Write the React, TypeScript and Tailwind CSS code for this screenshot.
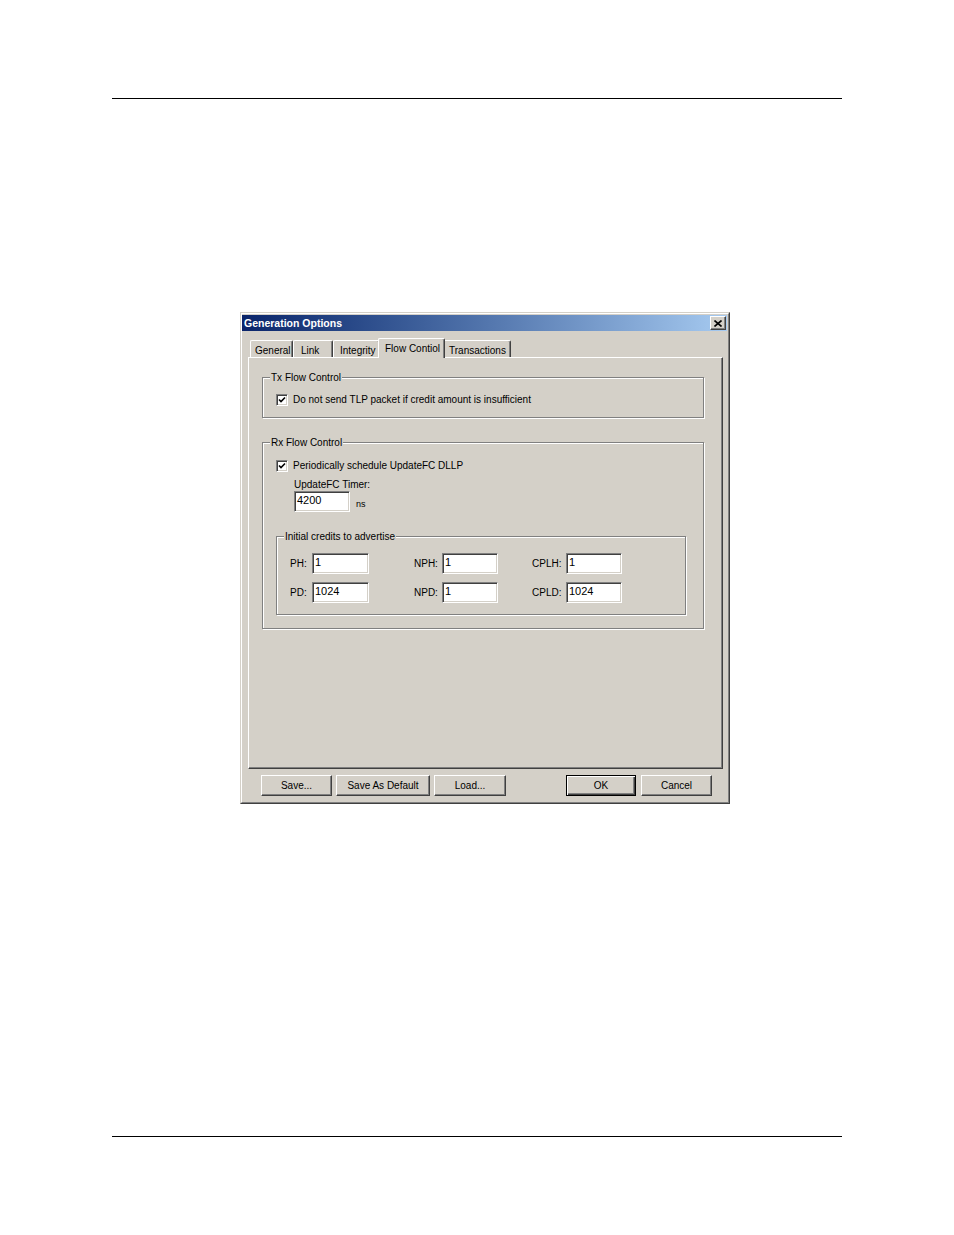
import React from "react";

const face = "bg-[#d4d0c8]";

function Raised({ className = "", children }: { className?: string; children?: React.ReactNode }) {
  return (
    <div
      className={`border border-t-white border-l-white border-r-[#404040] border-b-[#404040] shadow-[inset_-1px_-1px_0_#808080] ${face} ${className}`}
    >
      {children}
    </div>
  );
}

function Field({ value, w }: { value: string; w: string }) {
  return (
    <div
      className={`${w} h-[21px] bg-white border border-t-[#808080] border-l-[#808080] border-r-white border-b-white shadow-[inset_1px_1px_0_#404040,inset_-1px_-1px_0_#d4d0c8] pl-[2px] pt-[1px] leading-[15px] text-[11px] text-black`}
    >
      {value}
    </div>
  );
}

function CheckBox() {
  return (
    <div className="w-[12px] h-[12px] bg-white border border-t-[#808080] border-l-[#808080] border-r-white border-b-white shadow-[inset_1px_1px_0_#404040,inset_-1px_-1px_0_#d4d0c8] flex items-center justify-center">
      <svg width="8" height="8" viewBox="0 0 8 8">
        <path d="M1 3.5 L3 5.5 L7 1.5" stroke="black" strokeWidth="1.6" fill="none" />
      </svg>
    </div>
  );
}

function Group({
  label,
  className = "",
  children,
}: {
  label: string;
  className?: string;
  children?: React.ReactNode;
}) {
  return (
    <div className={`relative border border-[#808080] shadow-[inset_1px_1px_0_white,1px_1px_0_white] ${className}`}>
      <span className={`absolute -top-[6px] left-[7px] ${face} px-[1px] leading-[12px] whitespace-nowrap`}>{label}</span>
      {children}
    </div>
  );
}

function Tab({ label, w, pl, selected }: { label: string; w: string; pl: string; selected?: boolean }) {
  if (selected) {
    return (
      <div
        className={`${w} ${pl} h-[20px] -mb-px -mx-[2px] relative z-10 ${face} border-t border-l border-t-white border-l-white border-r border-r-[#404040] shadow-[inset_-1px_0_0_#808080] rounded-t-[2px] pt-[3px] leading-[14px] whitespace-nowrap`}
      >
        {label}
      </div>
    );
  }
  return (
    <div
      className={`${w} ${pl} h-[17px] ${face} border-t border-l border-t-white border-l-white border-r border-r-[#404040] shadow-[inset_-1px_0_0_#808080] rounded-t-[2px] pt-[3px] leading-[14px] whitespace-nowrap`}
    >
      {label}
    </div>
  );
}

function Btn({ label, w, def }: { label: string; w: string; def?: boolean }) {
  if (def) {
    return (
      <div
        className={`${w} h-[21px] border border-black shadow-[inset_1px_1px_0_white,inset_-1px_-1px_0_#404040,inset_-2px_-2px_0_#808080] ${face} flex items-center justify-center`}
      >
        {label}
      </div>
    );
  }
  return <Raised className={`${w} h-[21px] flex items-center justify-center`}>{label}</Raised>;
}

function CreditCell({ label, value, labelW, fieldW }: { label: string; value: string; labelW: string; fieldW: string }) {
  return (
    <div className="flex items-center">
      <span className={labelW}>{label}</span>
      <Field value={value} w={fieldW} />
    </div>
  );
}

export default function App() {
  return (
    <div className="w-[954px] h-[1235px] bg-white font-['Liberation_Sans',Arial,sans-serif] text-[10px] text-black flex flex-col">
      <div className="mt-[98px] ml-[112px] w-[730px] h-px bg-black" />

      <div className="ml-[240px] mt-[213px] w-[490px] h-[492px] border border-t-[#d4d0c8] border-l-[#d4d0c8] border-r-[#404040] border-b-[#404040]">
        <div className={`w-full h-full border border-t-white border-l-white border-r-[#808080] border-b-[#808080] ${face} flex flex-col`}>
          {/* title bar */}
          <div className="mt-[1px] mr-[1px] h-[16px] bg-gradient-to-r from-[#0a246a] to-[#a6caf0] flex items-center justify-between pl-[2px] pr-[1px]">
            <span className="font-bold text-white text-[10.5px] mt-[1px]">Generation Options</span>
            <Raised className="w-[16px] h-[14px] flex items-center justify-center">
              <svg width="8" height="7" viewBox="0 0 8 7">
                <path d="M0.5 0.5 L7.5 6.5 M7.5 0.5 L0.5 6.5" stroke="black" strokeWidth="1.6" />
              </svg>
            </Raised>
          </div>

          {/* tabs */}
          <div className="mt-[7px] ml-[8px] h-[19px] flex items-end">
            <Tab label="General" w="w-[43px]" pl="pl-[4px]" />
            <Tab label="Link" w="w-[40px]" pl="pl-[7px]" />
            <Tab label="Integrity" w="w-[47px]" pl="pl-[6px]" />
            <Tab label="Flow Contiol" w="w-[67px]" pl="pl-[6px]" selected />
            <Tab label="Transactions" w="w-[68px]" pl="pl-[5px]" />
          </div>

          {/* panel */}
          <Raised className="ml-[6px] w-[475px] h-[412px] flex flex-col">
            <Group label="Tx Flow Control" className="ml-[13px] mt-[19px] w-[442px] h-[41px]">
              <div className="flex items-center mt-[16px] ml-[13px] gap-[5px]">
                <CheckBox />
                <span className="leading-[12px]">Do not send TLP packet if credit amount is insufficient</span>
              </div>
            </Group>

            <Group label="Rx Flow Control" className="ml-[13px] mt-[24px] w-[442px] h-[187px] flex flex-col">
              <div className="flex items-center mt-[17px] ml-[13px] gap-[5px]">
                <CheckBox />
                <span className="leading-[12px]">Periodically schedule UpdateFC DLLP</span>
              </div>
              <div className="ml-[31px] mt-[7px] leading-[12px]">UpdateFC Timer:</div>
              <div className="ml-[31px] mt-[0px] flex items-center">
                <Field value="4200" w="w-[56px]" />
                <span className="ml-[6px] mt-[6px] text-[9px]">ns</span>
              </div>
              <Group label="Initial credits to advertise" className="ml-[13px] mt-[24px] w-[410px] h-[79px] flex flex-col gap-[8px] pt-[16px]">
                <div className="flex ml-[13px]">
                  <div className="w-[124px]"><CreditCell label="PH:" value="1" labelW="w-[22px]" fieldW="w-[57px]" /></div>
                  <div className="w-[118px]"><CreditCell label="NPH:" value="1" labelW="w-[28px]" fieldW="w-[56px]" /></div>
                  <CreditCell label="CPLH:" value="1" labelW="w-[34px]" fieldW="w-[56px]" />
                </div>
                <div className="flex ml-[13px]">
                  <div className="w-[124px]"><CreditCell label="PD:" value="1024" labelW="w-[22px]" fieldW="w-[57px]" /></div>
                  <div className="w-[118px]"><CreditCell label="NPD:" value="1" labelW="w-[28px]" fieldW="w-[56px]" /></div>
                  <CreditCell label="CPLD:" value="1024" labelW="w-[34px]" fieldW="w-[56px]" />
                </div>
              </Group>
            </Group>
          </Raised>

          {/* buttons */}
          <div className="mt-[6px] ml-[19px] flex">
            <Btn label="Save..." w="w-[71px]" />
            <div className="ml-[4px]"><Btn label="Save As Default" w="w-[94px]" /></div>
            <div className="ml-[4px]"><Btn label="Load..." w="w-[72px]" /></div>
            <div className="ml-[60px]"><Btn label="OK" w="w-[70px]" def /></div>
            <div className="ml-[5px]"><Btn label="Cancel" w="w-[71px]" /></div>
          </div>
        </div>
      </div>

      <div className="mt-[332px] ml-[112px] w-[730px] h-px bg-black" />
    </div>
  );
}
